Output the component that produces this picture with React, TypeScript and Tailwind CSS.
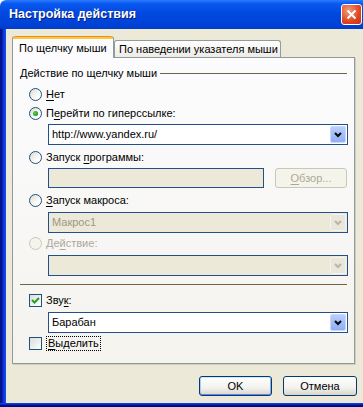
import React from "react";

const font = "font-['Liberation_Sans',Arial,sans-serif]";

const Radio = ({ checked = false, disabled = false }: { checked?: boolean; disabled?: boolean }) => (
  <span
    className={`relative flex h-[13px] w-[13px] shrink-0 items-center justify-center rounded-full border ${
      disabled
        ? "border-[#CAC8BB] bg-[#F5F4EA]"
        : "border-[#1C5180] bg-[linear-gradient(135deg,#DCD9CC,#FFFFFF_70%)]"
    }`}
  >
    {checked && (
      <span className="h-[5px] w-[5px] rounded-full bg-[radial-gradient(circle_at_40%_40%,#55D955,#21A121_60%,#1A8A1A)]" />
    )}
  </span>
);

const Checkbox = ({ checked = false }: { checked?: boolean }) => (
  <span className="flex h-[13px] w-[13px] shrink-0 items-center justify-center border border-[#1C5180] bg-[linear-gradient(135deg,#DCDCD7,#FFFFFF)]">
    {checked && (
      <svg width="9" height="9" viewBox="0 0 9 9">
        <path d="M1 4 L3.5 6.5 L8 2" fill="none" stroke="#21A121" strokeWidth="2" />
      </svg>
    )}
  </span>
);

const Chevron = ({ color }: { color: string }) => (
  <svg width="8" height="6" viewBox="0 0 8 6">
    <path d="M1 1 L4 4 L7 1" fill="none" stroke={color} strokeWidth="2.2" />
  </svg>
);

const Combo = ({ value, disabled = false }: { value: string; disabled?: boolean }) => (
  <div
    className={`flex h-[21px] w-[300px] items-center border border-[#24508A] p-[1px] ${
      disabled ? "bg-[#ECE9D8]" : "bg-white"
    }`}
  >
    <span className={`flex-1 pl-[2px] ${disabled ? "text-[#9C9880]" : "text-black"}`}>{value}</span>
    <span
      className={`flex h-[17px] w-[16px] items-center justify-center rounded-[2px] border ${
        disabled
          ? "border-[#F5F3EA] bg-[#E9E7DC]"
          : "border-[#C8D7FB] bg-[linear-gradient(to_bottom,#B9CEFA,#8FAFF3)]"
      }`}
    >
      <Chevron color={disabled ? "#BAB7A8" : "#0A0A14"} />
    </span>
  </div>
);

const OptionRow = ({ children, className = "" }: { children: React.ReactNode; className?: string }) => (
  <div className={`flex h-[14px] items-center gap-[4px] pl-[16px] ${className}`}>{children}</div>
);

const U = ({ children }: { children: React.ReactNode }) => <span className="underline underline-offset-[2px]">{children}</span>;

const XpButton = ({ label, def = false, disabled = false, width }: { label: React.ReactNode; def?: boolean; disabled?: boolean; width: string }) => (
  <div
    className={`flex h-[20px] ${width} items-center justify-center rounded-[3px] border ${
      disabled
        ? "border-[#C9C7BA] bg-[#F5F4EA] text-[#ACA899]"
        : "border-[#003C74] bg-[linear-gradient(to_bottom,#FFFFFF,#F3F2EE_60%,#D9D4C9)] text-black"
    } ${def ? "shadow-[inset_0_1px_0_#CEE7FF,inset_0_-1px_0_#6982EE,inset_1px_0_0_#A9CDF6,inset_-1px_0_0_#89ADE4]" : ""}`}
  >
    {label}
  </div>
);

export default function App() {
  return (
    <div className={`flex h-[407px] w-[363px] flex-col overflow-hidden text-[11px] leading-none text-black ${font}`}>
      {/* title bar */}
      <div className="flex h-[29px] items-center justify-between rounded-tl-[6px] bg-[linear-gradient(to_bottom,#2C7CFF,#0A5AF0_12%,#0048E0_45%,#0042D6_85%,#003DC8)] pl-[9px] pr-[1px]">
        <span className="text-[12.5px] font-bold text-white [text-shadow:1px_1px_0_#0A1E7A]">Настройка действия</span>
        <span className="flex h-[21px] w-[21px] items-center justify-center rounded-[3px] border border-white bg-[radial-gradient(circle_at_35%_30%,#F29C80,#E0461F_60%,#C0341A)]">
          <svg width="11" height="11" viewBox="0 0 11 11">
            <path d="M1.5 1.5 L9.5 9.5 M9.5 1.5 L1.5 9.5" stroke="white" strokeWidth="2" />
          </svg>
        </span>
      </div>

      <div className="flex flex-1">
        <div className="w-[6px] bg-[linear-gradient(to_right,#00138C,#00138C_33%,#0831D9_50%,#1650E8)]" />
        <div className="flex flex-1 flex-col bg-[#ECE9D8] pl-[6px] pt-[7px]">
          {/* tabs */}
          <div className="flex h-[21px] items-end">
            <div className="relative z-10 -mb-[1px] flex h-[22px] w-[102px] flex-col rounded-t-[3px] border-x border-[#919B9C] bg-[#FCFCFE]">
              <div className="h-[3px] rounded-t-[3px] border-t border-[#E68B2C] bg-[#FFC73C]" />
              <div className="flex flex-1 items-center pl-[6px]">По щелчку мыши</div>
            </div>
            <div className="flex h-[17px] w-[167px] items-center rounded-t-[3px] border-x border-t border-[#919B9C] bg-[linear-gradient(to_bottom,#FFFFFF,#ECEBE6)] pl-[4px]">
              По наведении указателя мыши
            </div>
          </div>

          {/* panel */}
          <div className="flex h-[307px] w-[343px] flex-col border border-[#919B9C] bg-[linear-gradient(to_bottom,#FCFCFE,#F4F3EE)] shadow-[1px_1px_0_#D0CEBF]">
            <div className="mt-[8px] flex h-[14px] items-center pl-[7px] pr-[7px]">
              <span>Действие по щелчку мыши</span>
              <span className="ml-[3px] h-px flex-1 bg-[#6B6547]" />
            </div>

            <OptionRow className="mt-[7px]">
              <Radio />
              <span><U>Н</U>ет</span>
            </OptionRow>
            <OptionRow className="mt-[5px]">
              <Radio checked />
              <span>П<U>е</U>рейти по гиперссылке:</span>
            </OptionRow>
            <div className="ml-[35px] mt-[4px]">
              <Combo value="http://www.yandex.ru/" />
            </div>

            <OptionRow className="mt-[5px]">
              <Radio />
              <span>Запуск <U>п</U>рограммы:</span>
            </OptionRow>
            <div className="ml-[35px] mt-[4px] flex gap-[11px]">
              <div className="h-[20px] w-[216px] border border-[#24508A] bg-[#ECE9D8]" />
              <XpButton label={<span><U>О</U>бзор...</span>} disabled width="w-[72px]" />
            </div>

            <OptionRow className="mt-[5px]">
              <Radio />
              <span><U>З</U>апуск макроса:</span>
            </OptionRow>
            <div className="ml-[35px] mt-[5px]">
              <Combo value="Макрос1" disabled />
            </div>

            <OptionRow className="mt-[3px]">
              <Radio disabled />
              <span className="text-[#ACA899]">Де<U>й</U>ствие:</span>
            </OptionRow>
            <div className="ml-[35px] mt-[5px]">
              <Combo value="" disabled />
            </div>

            <div className="mx-[7px] mt-[8px] h-px bg-[#6B6547]" />

            <OptionRow className="mt-[8px]">
              <Checkbox checked />
              <span>Зву<U>к</U>:</span>
            </OptionRow>
            <div className="ml-[35px] mt-[5px]">
              <Combo value="Барабан" />
            </div>
            <OptionRow className="mt-[3px]">
              <Checkbox />
              <span className="border border-dotted border-black px-[1px] py-[1px]"><U>В</U>ыделить</span>
            </OptionRow>
          </div>

          {/* buttons */}
          <div className="mt-[12px] flex justify-end gap-[11px] pr-[6px]">
            <XpButton label="OK" def width="w-[73px]" />
            <XpButton label="Отмена" width="w-[74px]" />
          </div>
        </div>
      </div>

      <div className="h-[4px] bg-[linear-gradient(to_bottom,#1650E8,#0831D9_25%,#00138C_60%,#000A60)]" />
    </div>
  );
}
